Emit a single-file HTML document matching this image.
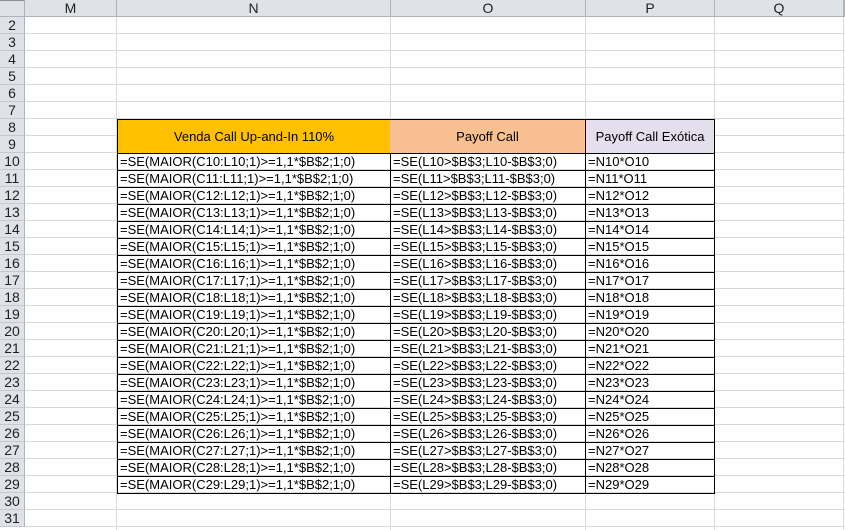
<!DOCTYPE html>
<html><head><meta charset="utf-8"><style>
*{margin:0;padding:0;box-sizing:border-box}
body{width:845px;height:530px;overflow:hidden;background:#fff;font-family:"Liberation Sans",Arial,sans-serif;position:relative}
.a{position:absolute}
.hdr{background:#dfe3e8;color:#222;font-size:14px;text-align:center;border-right:1px solid #aeb4bc;border-bottom:1px solid #aeb4bc;line-height:16px}
.rh{background:#dfe3e8;color:#222;font-size:14px;text-align:center;border-right:1px solid #aeb4bc;border-bottom:1px solid #c5cad0;line-height:16px}
.hl{height:1px;background:#d9d9d9;left:25px;width:820px}
.vl{width:1px;background:#d9d9d9;top:17px;height:513px}
.c{font-size:13px;color:#000;line-height:16px;white-space:nowrap;padding-left:2px;overflow:hidden}
.hc{font-size:13px;text-align:center;line-height:33px}
</style></head><body>
<div class="a hdr" style="left:0;top:0;width:25px;height:17px;border-top:1px solid #8a8f96"></div>
<div class="a hdr" style="left:25px;top:0;width:92px;height:17px">M</div>
<div class="a hdr" style="left:117px;top:0;width:274px;height:17px">N</div>
<div class="a hdr" style="left:391px;top:0;width:195px;height:17px">O</div>
<div class="a hdr" style="left:586px;top:0;width:129px;height:17px">P</div>
<div class="a hdr" style="left:715px;top:0;width:129px;height:17px">Q</div>
<div class="a hdr" style="left:844px;top:0;width:1px;height:17px"></div>
<div id="g"></div>
<script>
var h='';
for(var r=2;r<=31;r++){var t=17+(r-2)*17;
h+='<div class="a rh" style="left:0;top:'+t+'px;width:25px;height:17px">'+r+'</div>';
h+='<div class="a hl" style="top:'+(t+16)+'px"></div>';}
[117,391,586,715,844].forEach(function(x){h+='<div class="a vl" style="left:'+(x-1)+'px"></div>';});
h+='<div class="a hc" style="left:117px;top:119px;width:274px;height:35px;background:#ffc000;border:1px solid #000">Venda Call Up-and-In 110%</div>';
h+='<div class="a hc" style="left:390px;top:119px;width:196px;height:35px;background:#f8bf90;border:1px solid #000;border-left:none">Payoff Call</div>';
h+='<div class="a hc" style="left:585px;top:119px;width:130px;height:35px;background:#e4dfec;border:1px solid #000;border-left:1px solid #000">Payoff Call Exótica</div>';
for(var r=10;r<=29;r++){var t=153+(r-10)*17;
h+='<div class="a c" style="left:117px;top:'+t+'px;width:274px;height:18px;border:1px solid #000">=SE(MAIOR(C'+r+':L'+r+';1)&gt;=1,1*$B$2;1;0)</div>';
h+='<div class="a c" style="left:390px;top:'+t+'px;width:196px;height:18px;border:1px solid #000">=SE(L'+r+'&gt;$B$3;L'+r+'-$B$3;0)</div>';
h+='<div class="a c" style="left:585px;top:'+t+'px;width:130px;height:18px;border:1px solid #000">=N'+r+'*O'+r+'</div>';}
document.getElementById('g').innerHTML=h;
</script>
</body></html>
